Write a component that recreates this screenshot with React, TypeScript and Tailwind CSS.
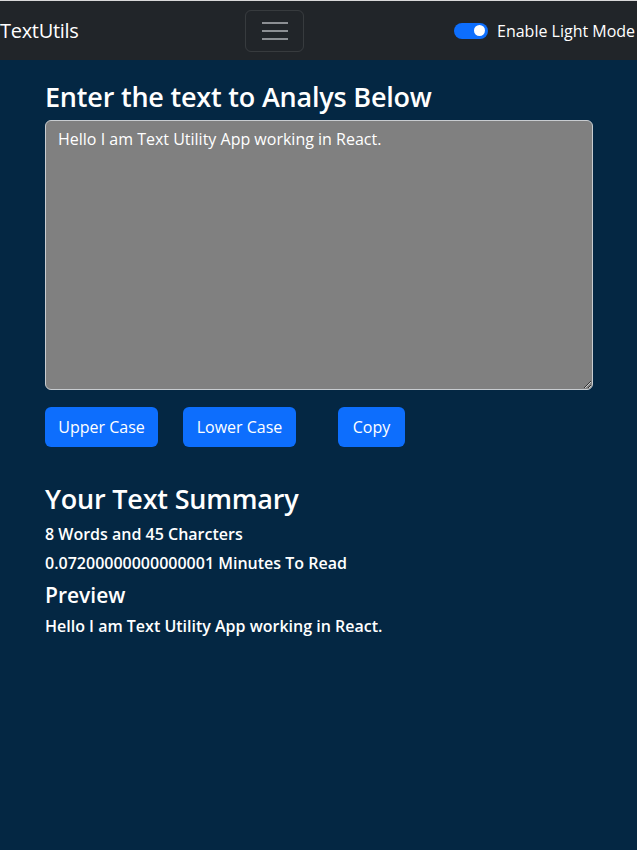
import React from 'react';

const text = 'Hello I am Text Utility App working in React.';

const Navbar = () => {
    return (
        <nav className="h-[60px] bg-[#212529] border-t border-[#d9d9d9] flex items-center whitespace-nowrap">
            <span className="w-[78px] text-[20px] text-white leading-[30px] tracking-[-0.3px]">TextUtils</span>
            <button className="ml-[167px] w-[59px] h-[42px] rounded-md border border-white/10 flex flex-col items-center justify-center gap-[6px]">
                <span className="block w-[26px] h-[2px] bg-[#8c8f93]"></span>
                <span className="block w-[26px] h-[2px] bg-[#8c8f93]"></span>
                <span className="block w-[26px] h-[2px] bg-[#8c8f93]"></span>
            </button>
            <div className="ml-[150px] flex items-center gap-[9px]">
                <div className="w-[34px] h-[16px] rounded-full bg-[#0d6efd] flex items-center justify-end pr-[3px]">
                    <span className="block w-[11px] h-[11px] rounded-full bg-white"></span>
                </div>
                <span className="text-[16px] text-white">Enable Light Mode</span>
            </div>
        </nav>
    );
};

const App = () => {
    return (
        <div className="min-h-screen w-full overflow-hidden bg-[#042743] text-white" style={{ fontFamily: '"Open Sans", "Noto Sans", sans-serif' }}>
            <Navbar />

            <main className="px-[45px] pt-[21px]">
                <h2 className="text-[27px] font-semibold leading-[32px] mb-[7px] tracking-[-0.2px]">Enter the text to Analys Below</h2>
                <textarea
                    className="block w-[548px] h-[270px] bg-[#808080] text-white text-[16px] leading-[24px] px-3 py-[6px] border border-[#c8ccd0] rounded-md outline-none"
                    value={text}
                    readOnly
                />

                <div className="flex mt-[17px]">
                    <button className="h-[40px] w-[113px] rounded-md bg-[#0d6efd] text-[16px] text-white">Upper Case</button>
                    <button className="h-[40px] w-[113px] ml-[25px] rounded-md bg-[#0d6efd] text-[16px] text-white">Lower Case</button>
                    <button className="h-[40px] w-[67px] ml-[42px] rounded-md bg-[#0d6efd] text-[16px] text-white">Copy</button>
                </div>

                {/* summary */}
                <h2 className="mt-[36px] text-[27px] font-semibold leading-[32px] mb-[5px] tracking-[-0.2px]">Your Text Summary</h2>
                <p className="text-[16px] font-semibold leading-[29px]">8 Words and 45 Charcters</p>
                <p className="text-[16px] font-semibold leading-[29px]">0.07200000000000001 Minutes To Read</p>
                <h4 className="mt-[5px] text-[21px] font-semibold leading-[25px] mb-[6px]">Preview</h4>
                <p className="text-[16px] font-semibold leading-[24px]">{text}</p>
            </main>
        </div>
    );
};

export default App;
